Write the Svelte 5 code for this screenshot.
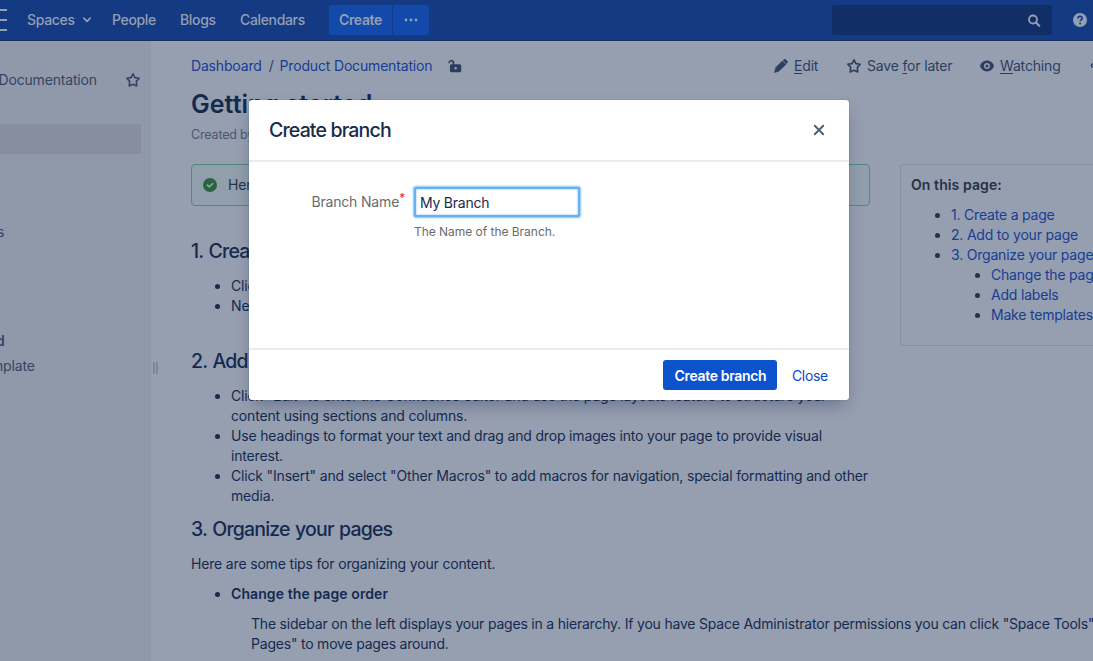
<script>
  const toc = ['1. Create a page', '2. Add to your page', '3. Organize your pages'];
  const subToc = ['Change the page order', 'Add labels', 'Make templates'];
  let branch = $state('My Branch');
</script>

{#snippet star()}
  <svg class="star" width="16" height="16" viewBox="0 0 16 16"><path d="M8 1.8 9.9 5.600 14.200 6.300 11.300 9.400 11.800 13.900 8 12.200 4.200 13.900 4.700 9.400 1.800 6.300 6.100 5.600Z" fill="none" stroke="currentColor" stroke-width="1.6" stroke-linejoin="round" /></svg>
{/snippet}

<div class="app">
  <header>
    <svg class="burger" width="7" height="24" viewBox="0 0 7 24"><path d="M0 2h7M0 12h7M0 22h7" stroke="currentColor" stroke-width="2" /></svg>
    <nav>
      <span class="spaces">Spaces <svg width="10" height="8" viewBox="0 0 10 8"><path d="M1.8 2.2 5 5.4 8.2 2.2" fill="none" stroke="currentColor" stroke-width="1.7" stroke-linecap="round" stroke-linejoin="round" /></svg></span>
      <span class="people">People</span>
      <span class="blogs">Blogs</span>
      <span class="calendars">Calendars</span>
    </nav>
    <div class="create"><span>Create</span><span class="dots"><svg width="14" height="4" viewBox="0 0 14 4"><g fill="currentColor"><circle cx="2" cy="2" r="1.4" /><circle cx="7" cy="2" r="1.4" /><circle cx="12" cy="2" r="1.4" /></g></svg></span></div>
    <div class="search"><svg width="14" height="14" viewBox="0 0 14 14"><g fill="none" stroke="currentColor" stroke-width="1.800"><circle cx="6" cy="6.500" r="4" /><path d="m9 9.500 3.200 3.200" stroke-width="2.200" stroke-linecap="round" /></g></svg></div>
    <svg class="help" width="14" height="14" viewBox="0 0 14 14"><circle cx="7" cy="7" r="7" fill="#959fb2" /><path d="M4.9 5.5C4.9 4.1 5.8 3.4 7 3.4s2.2.7 2.2 1.9c0 1.5-2 1.6-2 3" fill="none" stroke="#133a83" stroke-width="1.6" /><circle cx="7.1" cy="10.5" r="1" fill="#133a83" /></svg>
  </header>

  <div class="body">
    <aside>
      <div class="space"><span>Documentation</span>{@render star()}</div>
      <div class="selected"></div>
      <div class="side s1">s</div>
      <div class="side s2">d</div>
      <div class="side s3">mplate</div>
    </aside>
    <div class="grip"><i></i><i></i></div>
    <main>
      <div class="topline">
        <div class="crumbs"><a>Dashboard</a><b>/</b><a>Product Documentation</a>
          <svg width="14" height="16" viewBox="0 0 14 16"><path d="M1.200 4.500A2.300 2.300 0 0 1 5.400 3.800V7" fill="none" stroke="currentColor" stroke-width="1.700" stroke-linecap="round" /><path fill-rule="evenodd" d="M3.400 6.300h8.300a1.500 1.500 0 0 1 1.500 1.500v5a1.500 1.500 0 0 1-1.500 1.500H3.400a1.500 1.500 0 0 1-1.500-1.500v-5a1.500 1.500 0 0 1 1.500-1.500ZM7.600 9a1.300 1.300 0 1 0 0 2.600 1.300 1.300 0 0 0 0-2.600Z" fill="currentColor" /></svg>
        </div>
        <div class="tools">
          <span class="edit"><svg width="14" height="14" viewBox="0 0 14 14"><path d="M9 1.5 10.2.6c.5-.4 1-.4 1.4 0l1.7 1.6c.4.5.4.9 0 1.4l-1 1.1ZM8.300 1.900 11.900 5.500 4.800 12.200.5 13.600 1.600 8.700Z" fill="currentColor" stroke="currentColor" stroke-width=".5" /></svg><em><u>E</u>dit</em></span>
          <span class="save">{@render star()}<em>Save <u>f</u>or later</em></span>
          <span class="watch"><svg width="14" height="12" viewBox="0 0 14 12"><path fill-rule="evenodd" d="M7 .6C3.6.6 1 3 0 6c1 3 3.600 5.400 7 5.400S13 9 14 6C13 3 10.400.6 7 .6ZM7 3a3 3 0 1 1 0 6 3 3 0 0 1 0-6Z" fill="currentColor" /><circle cx="7" cy="6" r="1.500" fill="currentColor" /></svg><em><u>W</u>atching</em></span>
          <svg class="share" width="6" height="6" viewBox="0 0 6 6"><circle cx="3" cy="2.500" r="1.500" fill="none" stroke="currentColor" stroke-width="1.500" /></svg>
        </div>
      </div>
      <h1>Getting started</h1>
      <div class="byline">Created by</div>
      <div class="columns">
        <article>
          <div class="message"><svg width="14" height="14" viewBox="0 0 14 14"><circle cx="7" cy="7" r="7" fill="#28653f" /><path d="m4.400 7.100 1.800 1.800L9.700 5.500" fill="none" stroke="#94a0ad" stroke-width="1.600" stroke-linecap="round" stroke-linejoin="round" /></svg><span>Here</span></div>
          <h2>1. Create a page</h2>
          <ul class="first"><li>Click</li><li>New</li></ul>
          <h2>2. Add to your page</h2>
          <ul class="second">
            <li>Click "Edit" to enter the Confluence editor and use the page layouts feature to structure your<br />content using sections and columns.</li>
            <li>Use headings to format your text and drag and drop images into your page to provide visual<br />interest.</li>
            <li>Click "Insert" and select "Other Macros" to add macros for navigation, special formatting and other<br />media.</li>
          </ul>
          <h2>3. Organize your pages</h2>
          <p>Here are some tips for organizing your content.</p>
          <ul class="third"><li><strong>Change the page order</strong><p>The sidebar on the left displays your pages in a hierarchy. If you have Space Administrator permissions you can click "Space Tools"<br />Pages" to move pages around.</p></li></ul>
        </article>
        <section class="toc">
          <strong>On this page:</strong>
          <ul>
            {#each toc as item, i}
              <li><a>{item}</a>{#if i === 2}<ul>{#each subToc as sub}<li><a>{sub}</a></li>{/each}</ul>{/if}</li>
            {/each}
          </ul>
        </section>
      </div>
    </main>
  </div>

  <div class="dialog" role="dialog" aria-label="Create branch">
    <div class="head"><h3>Create branch</h3><svg width="12" height="12" viewBox="0 0 12 12"><path d="m1.800 1.800 8.400 8.400M10.200 1.800l-8.400 8.400" stroke="#505f79" stroke-width="2" stroke-linecap="round" /></svg></div>
    <div class="form">
      <label for="branch">Branch Name<sup>*</sup></label>
      <div class="field"><input id="branch" bind:value={branch} /><small>The Name of the Branch.</small></div>
    </div>
    <div class="foot"><button>Create branch</button><a>Close</a></div>
  </div>
</div>

<style>
  :global(body) { margin: 0; overflow: hidden; background: #969fb0; }
  * { box-sizing: border-box; }
  .app { position: relative; width: 1093px; height: 661px; overflow: hidden; font: 14px/20px Inter, "Liberation Sans", sans-serif; letter-spacing: -.17px; color: #152a4f; background: #969fb0; white-space: nowrap; }
  svg { display: block; flex: none; }
  a { color: #173d94; }
  ul { margin: 0; padding: 0 0 0 40px; list-style: disc; }
  header { display: flex; align-items: center; height: 41px; padding-bottom: 1px; background: #133a83; border-bottom: 1px solid #152f60; color: #959fb2; font-weight: 500; letter-spacing: -.34px; }
  nav { display: flex; margin-left: 20px; width: 302px; }
  nav span { flex: none; }
  .spaces { display: flex; align-items: center; gap: 7px; width: 85px; }
  .people { width: 68px; }
  .blogs { width: 60px; }
  .create { display: flex; gap: 1px; height: 30px; line-height: 30px; font-weight: 600; }
  .create span { width: 63px; text-align: center; background: #1249ab; border-radius: 3px 0 0 3px; }
  .create .dots { display: flex; width: 36px; align-items: center; justify-content: center; border-radius: 0 3px 3px 0; }
  .search { display: flex; align-items: center; justify-content: flex-end; width: 220px; height: 30px; margin-left: 403px; padding-right: 11px; background: #112f66; border-radius: 3px; }
  .help { margin-left: 21px; }
  .body { display: flex; height: 620px; }
  aside { flex: none; width: 151px; background: #9099aa; color: #344563; overflow: hidden; }
  .space { display: flex; justify-content: space-between; align-items: center; padding-right: 10px; margin: 29px 0 0 -1.500px; }
  .selected { width: 141px; height: 30px; margin-top: 34px; background: #868e9f; border-radius: 0 3px 3px 0; }
  .side { height: 20px; }
  .s1 { margin: 68px 0 0 -3px; }
  .s2 { margin: 89px 0 0 -4px; font-weight: 600; }
  .s3 { margin: 5px 0 0 -9px; }
  .grip { display: flex; align-items: flex-start; gap: 1px; width: 40px; padding: 321px 0 0 2px; flex: none; }
  .grip i { width: 2px; height: 12px; background: #7c869b; }
  main { width: 902px; flex: none; }
  .topline { display: flex; justify-content: space-between; height: 20px; margin-top: 15px; }
  .crumbs { display: flex; align-items: center; color: #2c3e60; }
  .crumbs b { font-weight: 400; margin: 0 6px 0 7px; }
  .crumbs svg { margin-left: 15.500px; }
  .tools { display: flex; align-items: center; color: #2c3e60; }
  .tools span { display: flex; align-items: center; }
  em { font-style: normal; }
  u { text-underline-offset: 2px; }
  .edit { width: 72px; gap: 6px; }
  .save { width: 134px; gap: 5px; }
  .watch { width: 110px; gap: 6px; }
  .share { margin-right: -3px; }
  h1 { margin: 14px 0 0; font-size: 25px; line-height: 28px; font-weight: 600; letter-spacing: .05px; }
  .byline { margin-top: 8px; font-size: 12.500px; line-height: 18px; letter-spacing: -.17px; color: #4a5874; }
  .columns { display: flex; align-items: flex-start; margin-top: 20px; }
  article { flex: none; width: 709px; }
  .message { display: flex; align-items: center; gap: 11px; width: 679px; height: 42px; padding-left: 11px; background: #919eab; border: 1px solid #55877b; border-radius: 4px; color: #25334b; }
  h2 { margin: 31px 0 0; font-size: 19.500px; line-height: 28px; font-weight: 450; letter-spacing: -.82px; word-spacing: 1px; }
  .first { margin: 11px 0 31px; }
  .first + h2 { margin-top: 0; }
  .second { margin-top: 11px; }
  .second + h2 { margin-top: 9px; }
  article > p { margin: 11px 0 10px; }
  .third p { margin: 10px 0 0 20px; letter-spacing: -.205px; }
  strong { font-weight: 600; letter-spacing: .09px; }
  .toc { flex: none; width: 230px; height: 182px; border: 1px solid #858fa3; border-radius: 3px; padding: 10px; color: #253148; }
  .toc > strong { display: block; margin-bottom: 10px; }
  .toc > ul { letter-spacing: -.2px; }
  .dialog { position: absolute; left: 249px; top: 100px; width: 600px; height: 300px; display: flex; flex-direction: column; background: #fff; border-radius: 3px; box-shadow: 0 8px 16px -4px rgba(9,30,66,.35), 0 0 1px rgba(9,30,66,.5); }
  .head { display: flex; align-items: center; justify-content: space-between; height: 62px; padding: 0 24px 0 20px; border-bottom: 2px solid #ebecf0; flex: none; }
  h3 { margin: 0; font-size: 19.500px; line-height: 28px; font-weight: 500; color: #172b4d; letter-spacing: -.83px; }
  .form { display: flex; flex: 1; padding: 24px 0 0; }
  label { width: 156px; margin: 6px 9px 0 0; text-align: right; color: #6b6b6b; }
  sup { color: #de350b; font-size: 12px; line-height: 0; vertical-align: 5px; }
  .field { display: flex; flex-direction: column; }
  input { width: 166px; height: 30px; margin-top: 1px; padding: 0 4px; border: 2px solid #67b1f3; border-radius: 2px; box-shadow: 0 0 2px 1px #83c0f7, inset 0 0 2px #62aef2; outline: 0; font: 14px/20px Inter, sans-serif; letter-spacing: -.22px; color: #172b4d; }
  small { margin-top: 5px; font-size: 12px; line-height: 20px; letter-spacing: -.03px; color: #6b6b6b; }
  .foot { display: flex; align-items: center; justify-content: flex-end; height: 52px; padding-right: 21px; border-top: 2px solid #ebecf0; flex: none; }
  button { width: 114px; height: 30px; margin-right: 14.500px; padding: 2px 0 0; border: 0; border-radius: 3px; background: #0b52cc; color: #fff; font: 600 14px/20px Inter, sans-serif; letter-spacing: -.33px; }
  .foot a { color: #0b49c0; margin-top: 2px; letter-spacing: -.3px; }
</style>
